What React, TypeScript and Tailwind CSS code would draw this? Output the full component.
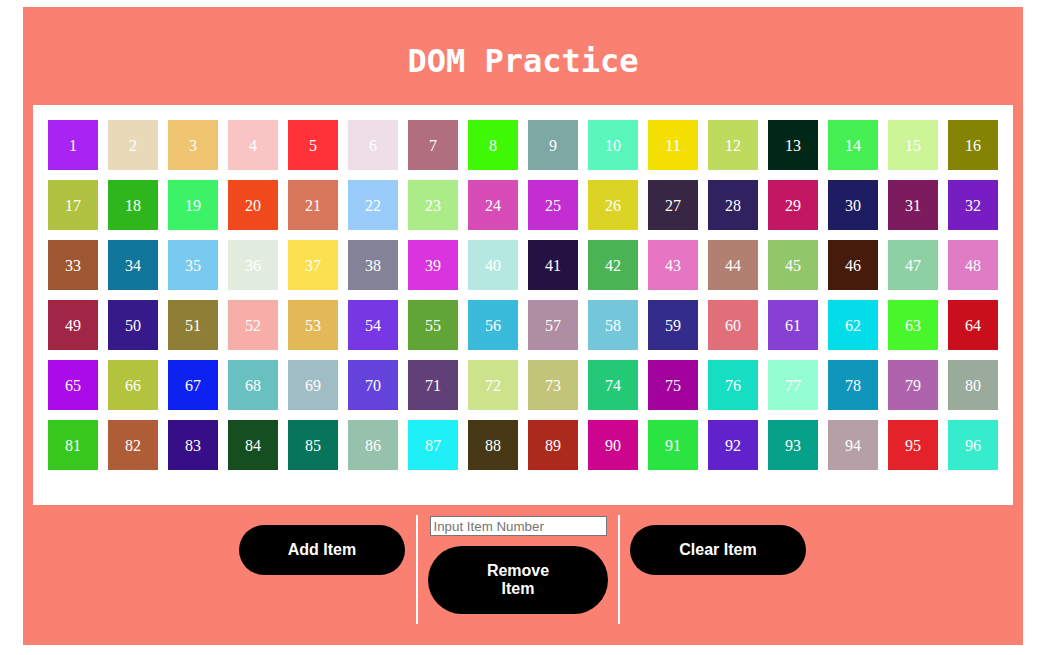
import React from 'react'

const colors = [
  '#A724F2', '#E8DAB9', '#EEC470', '#F9C4C4', '#FE3238', '#EEDEE6', '#B16E7E', '#3FF805',
  '#7EA8A3', '#5AF7BC', '#F3E002', '#BFDB5E', '#012817', '#45EF52', '#CCF596', '#858303',
  '#B0C340', '#2EB71D', '#3CF267', '#F0491B', '#D8765B', '#99CCF9', '#ABEB88', '#D84CB8',
  '#C22ED2', '#DCD424', '#372644', '#302160', '#C21762', '#1F1D61', '#7C1C5E', '#761EC1',
  '#9F5632', '#11769B', '#79CAF0', '#E1ECDE', '#FDE050', '#828398', '#DA34DE', '#B4E8E0',
  '#251242', '#4AB455', '#E574C2', '#B28071', '#92C66B', '#461B0B', '#8DD0A4', '#E07BC6',
  '#A12646', '#361A89', '#8F7F36', '#F8AEA8', '#E3B857', '#7738E3', '#60A535', '#3BBBDB',
  '#AF8DA2', '#74C7DA', '#342C8A', '#E16F7A', '#883FD4', '#03DDEA', '#47F62B', '#CA0F1C',
  '#AA0BE8', '#B3C33E', '#0D21F0', '#69C0C0', '#A0BDC5', '#6343DA', '#614078', '#CCE38B',
  '#C2C47A', '#24C977', '#A1019C', '#15DEC2', '#95FDD2', '#0F96BA', '#B063AD', '#9AAB9C',
  '#36C81C', '#AF5D37', '#360E87', '#154F21', '#06755B', '#96C2AD', '#1FF0F8', '#473916',
  '#AC291D', '#CD048D', '#2AE442', '#6222CB', '#07A088', '#B79FA8', '#E3222A', '#36ECCC',
]

const App = () => {
  return (
    <div className="w-[1046px] h-[655px] bg-white pt-[7px]">
      <div className="w-[1000px] h-[638px] mx-auto bg-[#FA8072] flex flex-col">
        <h1 className="pt-[36px] pb-[25px] leading-[37px] text-center text-white text-[32px] font-bold font-['DejaVu_Sans_Mono',monospace]">
          DOM Practice
        </h1>

        {/* item grid */}
        <div className="mx-[10px] h-[400px] bg-white p-[10px] flex flex-wrap content-start">
          {colors.map((c, i) => (
            <div
              key={i}
              className="w-[50px] h-[50px] m-[5px] pt-[1px] flex items-center justify-center text-white text-[16px] font-['Liberation_Serif',serif]"
              style={{ backgroundColor: c }}
            >
              {i + 1}
            </div>
          ))}
        </div>

        {/* controls */}
        <div className="flex justify-center items-start pt-[10px] font-['Liberation_Sans',Arial,sans-serif]">
          <button className="w-[166px] h-[50px] mt-[10px] ml-[10px] mr-[11px] rounded-full bg-black text-white font-bold text-[16px]">
            Add Item
          </button>
          <div className="w-[204px] h-[109px] border-x-2 border-white flex flex-col items-center">
            <input
              type="text"
              placeholder="Input Item Number"
              className="mt-[1px] w-[177px] h-[20px] pl-[3px] pr-[2px] bg-white border border-[#767676] text-[13.33px] text-black placeholder:text-[#757575] outline-none"
            />
            <button className="mt-[10px] w-[180px] h-[68px] rounded-full bg-black text-white font-bold text-[16px] leading-[18px] px-[50px]">
              Remove Item
            </button>
          </div>
          <button className="w-[176px] h-[50px] mt-[10px] ml-[10px] mr-[11px] rounded-full bg-black text-white font-bold text-[16px]">
            Clear Item
          </button>
        </div>
      </div>
    </div>
  )
}

export default App
